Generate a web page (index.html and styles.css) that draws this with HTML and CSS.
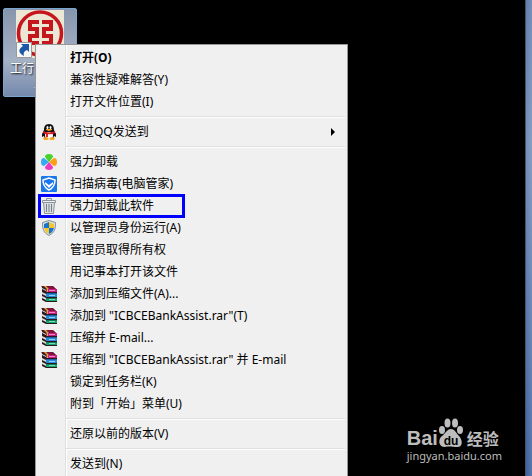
FILE: index.html
```html
<!DOCTYPE html>
<html lang="zh-CN">
<head>
<meta charset="utf-8">
<title>桌面</title>
<link rel="stylesheet" href="styles.css">
</head>
<body>
<svg class="defs" aria-hidden="true">
  <defs>
    <symbol id="books" viewBox="0 0 16 16">
      <path fill="#2a1a20" d="M0 1h1v13l4 2h11V4l-4-4H1z"/>
      <path fill="#85123c" d="M1 0h10l4 3H5z"/>
      <path fill="#c4217f" d="M5 3h11v3H5z"/>
      <path fill="#ec86c4" d="M8 4h6v1H8z"/>
      <path fill="#1c5fa8" d="M5 7h11v1H5z"/>
      <path fill="#2b8ad6" d="M5 8h11v3H5z"/>
      <path fill="#8fd0f8" d="M8 9h6v1H8z"/>
      <path fill="#0e7a52" d="M5 12h11v1H5z"/>
      <path fill="#18a572" d="M5 13h11v2H5z"/>
      <path fill="#74e0b4" d="M8 13h6v1H8z"/>
      <path fill="#ddd" d="M1 2l4 2v1L1 3zM1 6l4 2v2L1 8zM1 10l4 2v2l-4-2z"/>
      <path fill="#c9b62d" d="M3 0h2l3 3H6zM6 3h1v3H6z"/>
    </symbol>
  </defs>
</svg>
<main class="desktop">
  <a class="shortcut" href="#">
    <svg class="bank" viewBox="0 0 48 48" aria-hidden="true">
      <path fill="#ece6d5" d="M0 0h48v48H0z"/>
      <circle cx="24" cy="23.500" r="21.500" fill="none" stroke="#c5161d" stroke-width="3.500"/>
      <path fill="none" stroke="#c5161d" stroke-width="4" d="M23 12H14v7h7v7h-7v7h9M26 12h9v7h-7v7h7v7h-9"/>
      <path fill="#f7f7f7" stroke="#999" d="M.5 32.500h15v15H.5z"/>
      <path fill="#1c58a5" d="M5 34h8v8l-2-2c-3 1-4 3-3 6-6-3-6-7-1-10z"/>
    </svg>
    <span>工行网银助手</span>
  </a>
  <div class="window-edge"></div>
  <div class="watermark">
    <div class="brand">
      <span>Bai</span>
      <svg class="paw" viewBox="0 0 26 30" aria-hidden="true">
        <g>
          <ellipse cx="4" cy="12" rx="3" ry="4"/>
          <ellipse cx="9.500" cy="5" rx="3" ry="4.500"/>
          <ellipse cx="17" cy="5" rx="3" ry="4.500"/>
          <ellipse cx="22" cy="12" rx="3" ry="4"/>
          <path d="M13 11c4 0 5 4 8 7s5 11-2 11c-3 0-9-1-12 0-7 0-7-8-3-11 3-2 5-7 9-7z"/>
        </g>
        <text x="13" y="27" text-anchor="middle">du</text>
      </svg>
      <span class="cn">经验</span>
    </div>
    <div class="site">jingyan.baidu.com</div>
  </div>
  <nav class="menu" aria-label="快捷菜单">
    <button class="item strong"><span class="icon"></span><span>打开(O)</span></button>
    <button class="item"><span class="icon"></span><span>兼容性疑难解答(Y)</span></button>
    <button class="item"><span class="icon"></span><span>打开文件位置(I)</span></button>
    <hr>
    <button class="item"><svg class="icon" viewBox="0 0 16 16" aria-hidden="true"><path fill="#111" d="M8 0c4 0 5 3 5 6l2 4v3l-2-1-1 3H4l-1-3-2 1v-3l2-4c0-3 1-6 5-6z"/><ellipse cx="8" cy="11.500" rx="4" ry="3.500" fill="#fff"/><ellipse cx="6.500" cy="3.500" rx="1" ry="1.500" fill="#fff"/><ellipse cx="9.500" cy="3.500" rx="1" ry="1.500" fill="#fff"/><path fill="#f3a51c" d="M5 5h6v1l-3 1-3-1zM2 14l4-1 2 2-2 1H3zM14 14l-4-1-2 2 2 1h3z"/><path fill="#e51c23" d="M2 7q6 3 12 0v2q-4 2-7 1v3H5v-3L2 9z"/></svg><span>通过QQ发送到</span><svg class="arrow" viewBox="0 0 4 8" aria-hidden="true"><path d="M0 0l4 4-4 4z"/></svg></button>
    <hr>
    <button class="item"><svg class="icon" viewBox="0 0 16 16" aria-hidden="true"><path fill="#45d329" d="M8 8L4 3q0-3 4-3t4 3z"/><path fill="#ff9e18" d="M8 8l5-4q3 0 3 4t-3 4z"/><path fill="#ed38c3" d="M8 8l4 5q0 3-4 3t-4-3z"/><path fill="#35aaf3" d="M8 8l-5 4q-3 0-3-4t3-4z"/></svg><span>强力卸载</span></button>
    <button class="item"><svg class="icon" viewBox="0 0 16 16" aria-hidden="true"><rect width="16" height="16" rx="1" fill="#1b77ed"/><path fill="none" stroke="#fff" stroke-width="1.500" d="M8 2l6 2c0 5-2 8-6 10-4-2-6-5-6-10z"/><path fill="#fff" d="M4 6l4 3 4-3v2l-4 4-4-4z"/></svg><span>扫描病毒(电脑管家)</span></button>
    <button class="item marked"><svg class="icon" viewBox="0 0 16 16" aria-hidden="true"><path fill="#d9dee1" stroke="#8b949a" d="M2.500 4h11l-1 11.500h-9z"/><path fill="#eef1f2" stroke="#8b949a" d="M1.500 2.500h13v2h-13zM5.500 2.500v-2h5v2"/><path stroke="#768087" d="M5.500 6v8M8 6v8M10.500 6v8"/></svg><span>强力卸载此软件</span></button>
    <button class="item"><svg class="icon" viewBox="0 0 16 16" aria-hidden="true"><path fill="#dde2e5" stroke="#858e95" d="M8 .5l6.500 2c0 7-1 10-6.500 13-5.500-3-6.500-6-6.500-13z"/><path fill="#1973cf" d="M8 2v6H3V4zM8 8h5c-1 3-2 5-5 6z"/><path fill="#f6c629" d="M8 2l5 2v4H8zM3 8h5v6c-3-1-4-3-5-6z"/></svg><span>以管理员身份运行(A)</span></button>
    <button class="item"><span class="icon"></span><span>管理员取得所有权</span></button>
    <button class="item"><span class="icon"></span><span>用记事本打开该文件</span></button>
    <button class="item"><svg class="icon" aria-hidden="true"><use href="#books"/></svg><span>添加到压缩文件(A)...</span></button>
    <button class="item"><svg class="icon" aria-hidden="true"><use href="#books"/></svg><span>添加到 "ICBCEBankAssist.rar"(T)</span></button>
    <button class="item"><svg class="icon" aria-hidden="true"><use href="#books"/></svg><span>压缩并 E-mail...</span></button>
    <button class="item"><svg class="icon" aria-hidden="true"><use href="#books"/></svg><span>压缩到 "ICBCEBankAssist.rar" 并 E-mail</span></button>
    <button class="item"><span class="icon"></span><span>锁定到任务栏(K)</span></button>
    <button class="item"><span class="icon"></span><span>附到「开始」菜单(U)</span></button>
    <hr>
    <button class="item"><span class="icon"></span><span>还原以前的版本(V)</span></button>
    <hr>
    <button class="item"><span class="icon"></span><span>发送到(N)</span></button>
  </nav>
</main>
</body>
</html>
```
FILE: styles.css
```css
*, *::after { box-sizing: border-box; }
body { margin: 0; background: #000; font-family: "Noto Sans", "Noto Sans CJK SC", sans-serif; font-size: 12px; }
.defs { position: absolute; width: 0; height: 0; }
.desktop { position: relative; height: 100vh; overflow: hidden; }
.shortcut {
  position: absolute; left: 3px; top: 8px; width: 74px; height: 89px;
  display: flex; flex-direction: column; align-items: center; gap: 2px;
  padding-top: 1px; border: 1px solid #7aa5d2; border-radius: 2px;
  background: linear-gradient(#8795ac, #a5b1c4 60%, #7489ad);
  color: #fff; text-decoration: none; text-align: center; line-height: 18px;
  text-shadow: 1px 1px 2px #000;
}
.shortcut span { width: 62px; }
.bank { width: 48px; height: 48px; flex: none; }
.window-edge {
  position: absolute; right: 0; top: 0; bottom: 0; width: 7px;
  border-left: 1px solid #4a5361;
  background: linear-gradient(90deg, #ffffff00, #ffffff22), linear-gradient(#5f7fae, #7390ba 30%, #3c62a0);
}
.menu {
  position: absolute; left: 35px; top: 44px; width: 313px;
  padding: 2px; border: 1px solid #979797;
  background: linear-gradient(90deg, #f0f0f0 29px, #e0e0e0 29px, #e0e0e0 30px, #fff 30px, #fff 31px, #f0f0f0 31px);
}
.item {
  display: flex; align-items: center; gap: 13px; width: 100%; height: 22px;
  padding: 0 10px 0 3px; border: 0; background: none; color: #000;
  font: inherit; line-height: 22px; text-align: left; white-space: nowrap;
}
.item.strong { font-weight: bold; }
.icon { width: 16px; height: 16px; flex: none; }
.arrow { width: 4px; height: 8px; margin-left: auto; }
hr { height: 2px; margin: 3px 0 3px 28px; border: 0; border-top: 1px solid #e0e0e0; background: #fff; }
.marked { position: relative; }
.marked::after { content: ""; position: absolute; left: 0; top: -1px; width: 147px; height: 24px; border: 3px solid #00f; }
.watermark { position: absolute; right: 30px; bottom: 12px; color: #bdbdbd; }
.brand { display: flex; align-items: flex-end; font: bold 20px/20px "Liberation Sans", sans-serif; }
.paw { width: 26px; height: 30px; }
.paw g { fill: #bdbdbd; }
.paw text { font: bold 12px "Liberation Sans", sans-serif; }
.brand .cn { font: bold 16px/20px "Noto Sans CJK SC", sans-serif; margin-left: 3px; }
.site { font: 11px/16px "Noto Sans", sans-serif; }
```
